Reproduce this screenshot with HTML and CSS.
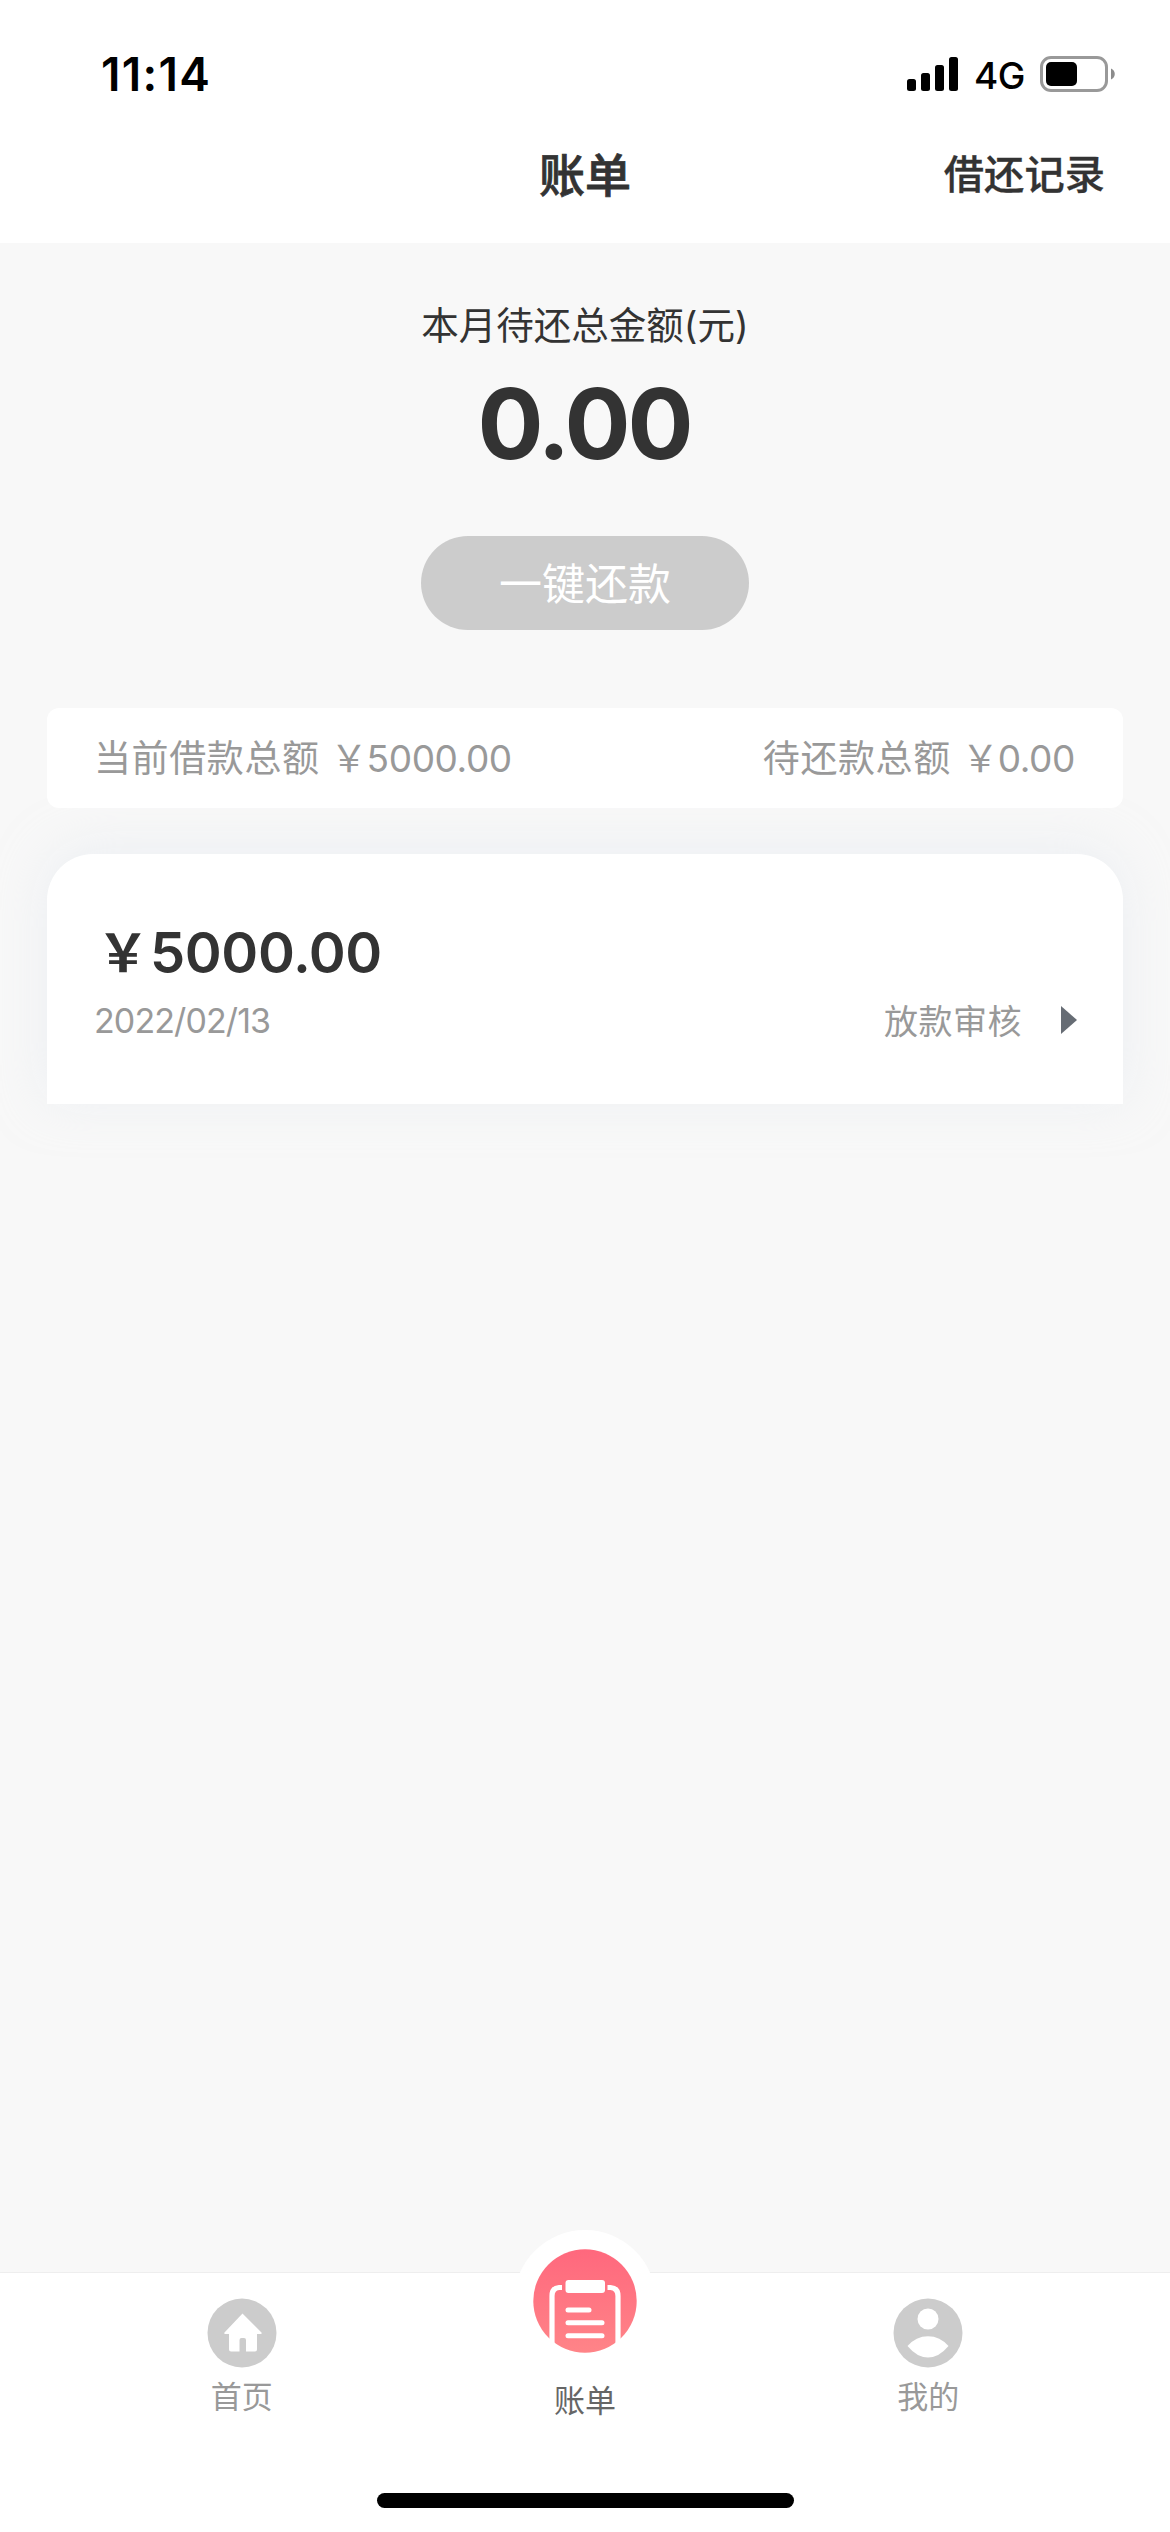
FILE: index.html
```html
<!DOCTYPE html>
<html lang="zh-CN">
<head>
<meta charset="utf-8">
<title>账单</title>
<link rel="stylesheet" href="styles.css">
</head>
<body>
<div class="screen">
  <header class="header">
    <div class="status">
      <span class="time">11:14</span>
      <div class="indicators">
        <svg class="signal" width="51" height="34" viewBox="0 0 51 34"><rect y="22" width="9" height="12" rx="2.5"/><rect x="14" y="16" width="9" height="18" rx="2.5"/><rect x="28" y="8" width="9" height="26" rx="2.5"/><rect x="42" width="9" height="34" rx="2.5"/></svg>
        <span class="network">4G</span>
        <svg class="battery" width="76" height="36" viewBox="0 0 76 36"><rect x="1.5" y="1.5" width="65" height="33" rx="9.5" fill="none" stroke="#999" stroke-width="3"/><rect x="6" y="6" width="31" height="24" rx="5"/><path d="M71 12.5c5 2 5 9 0 11z" fill="#8c8c8c"/></svg>
      </div>
    </div>
    <nav class="navbar">
      <h1 class="title">账单</h1>
      <a class="history">借还记录</a>
    </nav>
  </header>
  <main class="content">
    <section class="summary">
      <p class="label">本月待还总金额(元)</p>
      <p class="total">0.00</p>
      <button class="repay">一键还款</button>
    </section>
    <section class="totals">
      <div class="pair"><span class="cjk">当前借款总额</span><span class="yen">￥</span><span class="num">5000.00</span></div>
      <div class="pair"><span class="cjk">待还款总额</span><span class="yen">￥</span><span class="num">0.00</span></div>
    </section>
    <section class="loan">
      <p class="amount"><span class="yen">￥</span><span>5000.00</span></p>
      <div class="detail">
        <span class="date">2022/02/13</span>
        <span class="state"><span class="state-text">放款审核</span><svg width="16" height="28" viewBox="0 0 16 28"><path d="M0 0 16 14 0 28z" fill="#666c74"/></svg></span>
      </div>
    </section>
  </main>
  <footer class="tabbar">
    <div class="tabs">
      <a class="tab home">
        <svg width="70" height="70" viewBox="0 0 70 70"><circle cx="35" cy="35" r="34.5" fill="#ccc"/><path d="M35.5 15.500 54.500 34.500Q55 36 53.500 36H50V51.500Q50 53.500 48 53.500H39V42Q39 40 37 40H34.500Q32.500 40 32.500 42V53.500H24Q22 53.500 22 51.500V36H18.500Q16.500 36 17.500 34.500z" fill="#fff"/></svg>
        <span>首页</span>
      </a>
      <a class="tab bills">
        <svg width="142" height="142" viewBox="0 0 142 142"><defs><linearGradient id="pink" x1="0" y1="0" x2="0" y2="1"><stop offset="0" stop-color="#ff687d"/><stop offset="1" stop-color="#ff8488"/></linearGradient></defs><circle cx="71" cy="71" r="71" fill="#fff"/><circle cx="71" cy="71" r="51.7" fill="url(#pink)"/><g fill="none" stroke="#fff" stroke-width="5.2"><path d="M48 57.500H45Q38 58 38 66V120"/><path d="M93.500 57.500H96.500Q104 58 104 66V120"/></g><g fill="#fff"><rect x="51.500" y="50" width="39.500" height="13" rx="3"/><rect x="51.500" y="77.500" width="26" height="5" rx="2.5"/><rect x="51.500" y="90.300" width="39" height="5" rx="2.5"/><rect x="51.500" y="103.300" width="39" height="5" rx="2.5"/></g></svg>
        <span>账单</span>
      </a>
      <a class="tab mine">
        <svg width="70" height="70" viewBox="0 0 70 70"><circle cx="35" cy="35" r="34.5" fill="#ccc"/><circle cx="35" cy="21" r="10.5" fill="#fff"/><path d="M14.500 48Q23 38.200 35 38.200T55.500 48Q46 59.500 35 59.500T14.500 48z" fill="#fff"/></svg>
        <span>我的</span>
      </a>
    </div>
    <div class="indicator"></div>
  </footer>
</div>
</body>
</html>
```

FILE: styles.css
```css
* { box-sizing: border-box; margin: 0; padding: 0; }
body { background: #f8f8f8; color: #333; font-family: Inter, "Noto Sans CJK SC", sans-serif; }
svg { display: block; flex: none; }
.screen { width: 1170px; height: 2532px; display: flex; flex-direction: column; overflow: hidden; }
.header { height: 243px; background: #fff; }
.status { height: 148px; padding: 0 54px 0 101px; display: flex; justify-content: space-between; align-items: center; color: #000; }
.time { font-size: 46px; font-weight: 600; line-height: 60px; letter-spacing: 1.3px; }
.indicators { display: flex; align-items: center; }
.network { width: 82px; padding: 3px 0 0 16px; font-size: 37px; font-weight: 500; line-height: 48px; letter-spacing: -0.6px; }
.navbar { height: 54px; padding: 0 65px; display: grid; grid-template-columns: 1fr auto 1fr; align-items: center; }
.title { grid-column: 2; font-size: 46px; font-weight: 500; line-height: 52px; -webkit-text-stroke: 0.8px #333; }
.history { justify-self: end; font-size: 40.3px; font-weight: 500; line-height: 54px; -webkit-text-stroke: 0.3px #333; }
.content { flex: 1; padding: 53px 47px 0; }
.summary { display: flex; flex-direction: column; align-items: center; }
.label { font-size: 37.5px; line-height: 60px; }
.total { font-size: 98px; line-height: 120px; font-weight: 700; margin-top: 8px; padding-right: 2px; letter-spacing: -3px; }
.repay { margin-top: 52px; width: 328px; height: 94px; padding-bottom: 4px; border: 0; border-radius: 47px; background: #ccc; color: #fff; font: inherit; font-size: 43px; }
.totals { height: 100px; margin-top: 78px; padding: 2px 48px 0 47px; border-radius: 12px; background: #fff; display: flex; justify-content: space-between; align-items: center; color: #999; font-size: 37px; line-height: 50px; position: relative; z-index: 1; }
.pair { display: flex; white-space: nowrap; }
.cjk { letter-spacing: 0.6px; }
.num { letter-spacing: -0.4px; }
.totals .yen { margin: 0 -1px 0 11px; }
.loan { height: 250px; margin-top: 46px; padding: 67px 46px 0 47px; border-radius: 46px 46px 0 0; background: #fff; box-shadow: 0 -6px 50px rgba(226, 232, 240, .5); }
.amount { display: flex; font-size: 56px; font-weight: 600; line-height: 64px; letter-spacing: -0.4px; }
.amount .yen { width: 56px; padding-left: 3px; font-size: 52px; line-height: 66px; }
.detail { display: flex; justify-content: space-between; align-items: center; height: 66px; color: #999; font-size: 34px; }
.date { letter-spacing: -0.9px; padding-top: 1px; }
.state { display: flex; align-items: center; gap: 39px; }
.state-text { letter-spacing: 0.5px; padding-bottom: 1px; }
.tabbar { height: 260px; background: #fff; border-top: 1px solid #eee; display: flex; flex-direction: column; justify-content: space-between; align-items: center; padding-bottom: 24px; }
.tabs { width: 1030px; display: grid; grid-template-columns: repeat(3, 1fr); font-size: 31px; color: #999; }
.tab { display: flex; flex-direction: column; align-items: center; line-height: 44px; padding-top: 25px; gap: 7px; }
.bills { padding-top: 0; margin-top: -43px; color: #666; }
.indicator { width: 417px; height: 15px; border-radius: 8px; background: #000; }
```
